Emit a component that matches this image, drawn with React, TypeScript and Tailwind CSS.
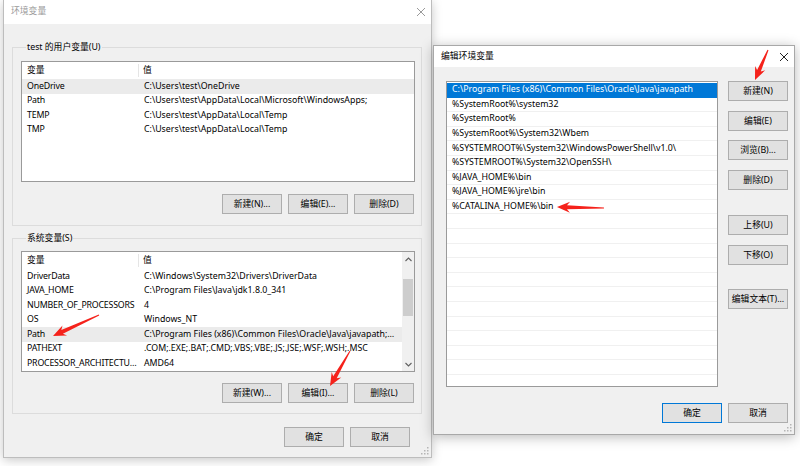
import React from 'react';

const FONT = { fontFamily: '"Noto Sans", "Noto Sans CJK SC", sans-serif' };

const USER_VARS: [string, string][] = [
  ['OneDrive', 'C:\\Users\\test\\OneDrive'],
  ['Path', 'C:\\Users\\test\\AppData\\Local\\Microsoft\\WindowsApps;'],
  ['TEMP', 'C:\\Users\\test\\AppData\\Local\\Temp'],
  ['TMP', 'C:\\Users\\test\\AppData\\Local\\Temp'],
];

const SYS_VARS: [string, string][] = [
  ['DriverData', 'C:\\Windows\\System32\\Drivers\\DriverData'],
  ['JAVA_HOME', 'C:\\Program Files\\Java\\jdk1.8.0_341'],
  ['NUMBER_OF_PROCESSORS', '4'],
  ['OS', 'Windows_NT'],
  ['Path', 'C:\\Program Files (x86)\\Common Files\\Oracle\\Java\\javapath;C:\\Windows\\system32'],
  ['PATHEXT', '.COM;.EXE;.BAT;.CMD;.VBS;.VBE;.JS;.JSE;.WSF;.WSH;.MSC'],
  ['PROCESSOR_ARCHITECTURE', 'AMD64'],
];

const PATHS = [
  'C:\\Program Files (x86)\\Common Files\\Oracle\\Java\\javapath',
  '%SystemRoot%\\system32',
  '%SystemRoot%',
  '%SystemRoot%\\System32\\Wbem',
  '%SYSTEMROOT%\\System32\\WindowsPowerShell\\v1.0\\',
  '%SYSTEMROOT%\\System32\\OpenSSH\\',
  '%JAVA_HOME%\\bin',
  '%JAVA_HOME%\\jre\\bin',
  '%CATALINA_HOME%\\bin',
];

function Btn({ label, primary = false }: { label: string; primary?: boolean }) {
  return (
    <div
      className={`flex h-[20px] w-[60px] shrink-0 items-center justify-center border bg-[#e1e1e1] text-[8.8px] leading-none text-black ${
        primary ? 'border-[#0078d7]' : 'border-[#adadad]'
      }`}
    >
      {label}
    </div>
  );
}

function Grip() {
  return (
    <svg width="8" height="8" viewBox="0 0 8 8" className="absolute bottom-[2px] right-[2px]">
      {[
        [6, 0], [6, 3], [3, 3], [6, 6], [3, 6], [0, 6],
      ].map(([x, y], i) => (
        <rect key={i} x={x} y={y} width="1.5" height="1.5" fill="#b5b5b5" />
      ))}
    </svg>
  );
}

function CloseX({ color }: { color: string }) {
  return (
    <svg width="10" height="10" viewBox="0 0 10 10">
      <path d="M1 1L9 9M9 1L1 9" stroke={color} strokeWidth="1" />
    </svg>
  );
}

function VarList({
  rows,
  selected,
  scroll = false,
  height,
}: {
  rows: [string, string][];
  selected: number;
  scroll?: boolean;
  height: string;
}) {
  return (
    <div className={`relative flex ${height} border border-[#9a9a9a] bg-white`}>
      <div className="min-w-0 flex-1">
        <div className="flex h-[17px] items-center text-[8.8px]">
          <div className="w-[117px] shrink-0 border-r border-[#e5e5e5] pl-[5px]">变量</div>
          <div className="pl-[4px]">值</div>
        </div>
        {rows.map(([k, v], i) => (
          <div
            key={k + i}
            className={`flex h-[14.5px] items-center text-[8.8px] text-black ${i === selected ? 'bg-[#ebebeb]' : ''}`}
          >
            <div className="w-[118px] shrink-0 truncate pl-[5px] pr-[1px] tracking-[-0.2px]">{k}</div>
            <div className="min-w-0 flex-1 truncate pl-[4px] pr-[4px]">{v}</div>
          </div>
        ))}
      </div>
      {scroll ? (
        <div className="flex w-[12px] shrink-0 flex-col bg-[#f0f0f0]">
          <div className="flex h-[14px] items-center justify-center">
            <svg width="7" height="5" viewBox="0 0 7 5">
              <path d="M0.5 4L3.5 1L6.5 4" stroke="#606060" fill="none" strokeWidth="1.1" />
            </svg>
          </div>
          <div className="h-[13px]" />
          <div className="mx-[1px] h-[37px] bg-[#cdcdcd]" />
          <div className="flex-1" />
          <div className="flex h-[14px] items-center justify-center">
            <svg width="7" height="5" viewBox="0 0 7 5">
              <path d="M0.5 1L3.5 4L6.5 1" stroke="#606060" fill="none" strokeWidth="1.1" />
            </svg>
          </div>
        </div>
      ) : null}
    </div>
  );
}

function arrowPoints(tx: number, ty: number, hx: number, hy: number) {
  const dx = hx - tx;
  const dy = hy - ty;
  const len = Math.hypot(dx, dy);
  const ux = dx / len;
  const uy = dy / len;
  const nx = -uy;
  const ny = ux;
  const headLen = 13;
  const headW = 5.5;
  const bx = hx - ux * headLen;
  const by = hy - uy * headLen;
  const nb = bx + ux * 3;
  const nby = by + uy * 3;
  const pts = [
    [tx + nx * 0.5, ty + ny * 0.5],
    [nb + nx * 2, nby + ny * 2],
    [bx + nx * headW, by + ny * headW],
    [hx, hy],
    [bx - nx * headW, by - ny * headW],
    [nb - nx * 2, nby - ny * 2],
    [tx - nx * 0.5, ty - ny * 0.5],
  ];
  return pts.map(([x, y]) => `${x.toFixed(1)},${y.toFixed(1)}`).join(' ');
}

export default function App() {
  return (
    <div className="relative h-[466px] w-[800px] overflow-hidden bg-white text-black" style={FONT}>
      {/* 环境变量 window */}
      <div className="absolute left-[3px] top-0 flex h-[458px] w-[429px] flex-col border border-t-0 border-[#bdbdbd] bg-[#f0f0f0] shadow-[0_2px_10px_rgba(0,0,0,0.22)]">
        <div className="flex h-[24px] shrink-0 items-center justify-between bg-white pl-[7px] pr-[5px]">
          <span className="text-[8.8px] text-[#9a9a9a]">环境变量</span>
          <CloseX color="#9a9a9a" />
        </div>

        <fieldset className="ml-[8px] mt-[17px] w-[410px] min-w-0 border border-[#dcdcdc] pb-[11px] pl-[8px] pr-[6px] pt-[7px]">
          <legend className="ml-[5px] px-[1px] text-[8.8px] leading-[13px]">test 的用户变量(U)</legend>
          <VarList rows={USER_VARS} selected={0} height="h-[121px]" />
          <div className="mt-[12px] flex justify-end gap-[6px] pr-[1px]">
            <Btn label="新建(N)..." />
            <Btn label="编辑(E)..." />
            <Btn label="删除(D)" />
          </div>
        </fieldset>

        <fieldset className="ml-[8px] mt-[6px] w-[410px] min-w-0 border border-[#dcdcdc] pb-[10px] pl-[8px] pr-[6px] pt-[6px]">
          <legend className="ml-[5px] px-[1px] text-[8.8px] leading-[13px]">系统变量(S)</legend>
          <VarList rows={SYS_VARS} selected={4} scroll height="h-[121px]" />
          <div className="mt-[11px] flex justify-end gap-[6px] pr-[1px]">
            <Btn label="新建(W)..." />
            <Btn label="编辑(I)..." />
            <Btn label="删除(L)" />
          </div>
        </fieldset>

        <div className="mt-[13px] flex justify-end gap-[6px] pr-[21px]">
          <Btn label="确定" />
          <Btn label="取消" />
        </div>
        <Grip />
      </div>

      {/* 编辑环境变量 window */}
      <div className="absolute left-[433px] top-[45px] flex h-[390px] w-[362px] flex-col border border-[#a8a8a8] bg-[#f0f0f0] shadow-[0_2px_12px_rgba(0,0,0,0.28)]">
        <div className="flex h-[21px] shrink-0 items-center justify-between bg-white pl-[7px] pr-[5px]">
          <span className="text-[8.8px]">编辑环境变量</span>
          <CloseX color="#222" />
        </div>
        <div className="mt-[14px] flex pl-[12px] pr-[6px]">
          <div className="h-[306px] w-[272px] overflow-hidden border border-[#9a9a9a] bg-white pt-[1px]">
            {Array.from({ length: 21 }, (_, i) => {
              const p = PATHS[i];
              return (
                <div
                  key={i}
                  className={`flex h-[14.6px] items-center border-b pl-[5px] text-[8.8px] ${
                    i === 0 ? 'border-[#0078d7] bg-[#0078d7] text-white' : 'border-[#f0f0f0] text-black'
                  }`}
                >
                  {p ?? ''}
                </div>
              );
            })}
          </div>
          <div className="ml-auto flex flex-col">
            <Btn label="新建(N)" />
            <div className="mt-[10px]"><Btn label="编辑(E)" /></div>
            <div className="mt-[9px]"><Btn label="浏览(B)..." /></div>
            <div className="mt-[10px]"><Btn label="删除(D)" /></div>
            <div className="mt-[25px]"><Btn label="上移(U)" /></div>
            <div className="mt-[10px]"><Btn label="下移(O)" /></div>
            <div className="mt-[24px]"><Btn label="编辑文本(T)..." /></div>
          </div>
        </div>
        <div className="mt-[16px] flex justify-end gap-[6px] pr-[6px]">
          <Btn label="确定" primary />
          <Btn label="取消" />
        </div>
        <Grip />
      </div>

      {/* annotation arrows */}
      <svg className="pointer-events-none absolute left-0 top-0" width="800" height="466">
        <polygon points={arrowPoints(99, 315, 53, 336)} fill="#f5221b" />
        <polygon points={arrowPoints(350, 351, 330, 386)} fill="#f5221b" />
        <polygon points={arrowPoints(768, 50, 755, 80)} fill="#f5221b" />
        <polygon points={arrowPoints(604, 208, 557, 207)} fill="#f5221b" />
      </svg>
    </div>
  );
}
